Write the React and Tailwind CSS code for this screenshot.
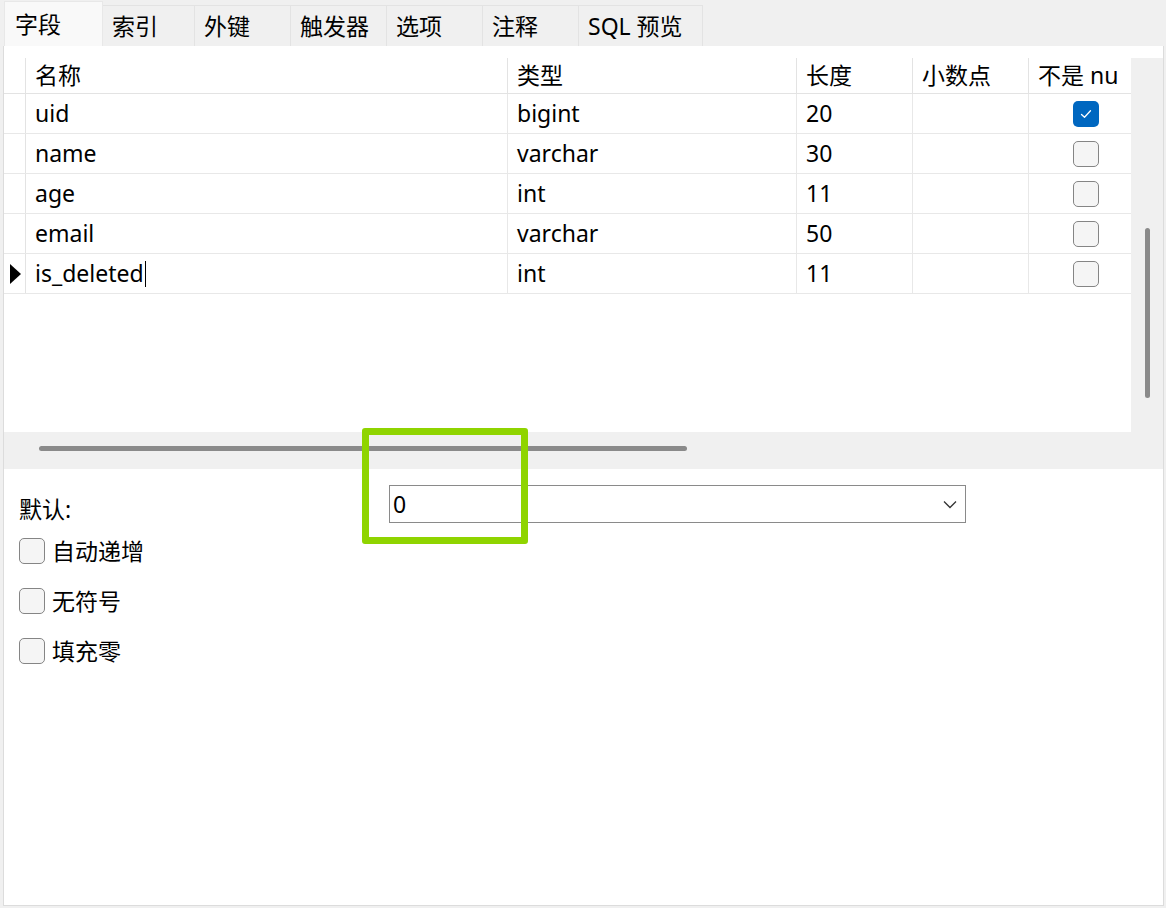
import React from "react";

const font = { fontFamily: '"Noto Sans", "Noto Sans CJK SC", sans-serif' };

function Check({ checked }) {
  if (checked) {
    return (
      <div className="w-[26px] h-[26px] rounded-[5px] bg-[#0067c0] flex items-center justify-center">
        <svg width="14" height="14" viewBox="0 0 14 14" fill="none">
          <path d="M2.5 7.5 L5.5 10.2 L11.5 3.8" stroke="white" strokeWidth="1.3" strokeLinecap="round" strokeLinejoin="round" />
        </svg>
      </div>
    );
  }
  return <div className="w-[26px] h-[26px] rounded-[5px] bg-[#f5f5f5] border border-[#858585]" />;
}

const rows = [
  { name: "uid", type: "bigint", len: "20", nn: true },
  { name: "name", type: "varchar", len: "30" },
  { name: "age", type: "int", len: "11" },
  { name: "email", type: "varchar", len: "50" },
  { name: "is_deleted", type: "int", len: "11", current: true },
];

const tabs = ["索引", "外键", "触发器", "选项", "注释", "SQL 预览"];
const tabW = ["w-[92px]", "w-[96px]", "w-[96px]", "w-[96px]", "w-[96px]", "w-[124px]"];

export default function App() {
  return (
    <div className="relative w-[1166px] h-[908px] bg-[#f0f0f0] text-[23px] text-black overflow-hidden" style={font}>
      {/* Tabs */}
      <div className="flex items-end h-[46px] pl-[4px]">
        <div className="w-[99px] h-[45px] bg-[#f9f9f9] border-t border-l border-r border-[#e8e8e8] flex items-center pl-[10px] leading-none">
          字段
        </div>
        {tabs.map((t, i) => (
          <div
            key={t}
            className={`${tabW[i]} h-[41px] border-t border-r border-[#e3e3e3] bg-[#f0f0f0] flex items-center pl-[9px] leading-none whitespace-nowrap`}
          >
            {t}
          </div>
        ))}
      </div>

      {/* Panel */}
      <div className="ml-[3px] w-[1161px] h-[860px] bg-white border-l border-r border-b border-[#dcdcdc] flex flex-col">
        <div className="h-[12px]" />
        <div className="flex h-[374px]">
          {/* Grid */}
          <div className="w-[1127px] bg-white">
            <div className="flex h-[36px] border-b border-[#e3e3e3]">
              <div className="w-[22px] border-r border-[#e3e3e3]" />
              <div className="w-[482px] border-r border-[#e3e3e3] pl-[9px] flex items-center">名称</div>
              <div className="w-[289px] border-r border-[#e3e3e3] pl-[9px] flex items-center">类型</div>
              <div className="w-[116px] border-r border-[#e3e3e3] pl-[9px] flex items-center">长度</div>
              <div className="w-[116px] border-r border-[#e3e3e3] pl-[9px] flex items-center">小数点</div>
              <div className="w-[102px] pl-[9px] flex items-center whitespace-nowrap overflow-hidden">不是 nu</div>
            </div>
            {rows.map((r) => (
              <div key={r.name} className="flex h-[40px] border-b border-[#e8e8e8]">
                <div className="w-[22px] border-r border-[#e3e3e3] flex items-center pl-[6px]">
                  {r.current && (
                    <svg width="12" height="20" viewBox="0 0 12 20">
                      <path d="M0 0 L11 10 L0 20 Z" fill="black" />
                    </svg>
                  )}
                </div>
                <div className="w-[482px] border-r border-[#e8e8e8] pl-[9px] flex items-center">
                  {r.name}
                  {r.current && <span className="inline-block w-[1px] h-[26px] bg-black ml-[1px]" />}
                </div>
                <div className="w-[289px] border-r border-[#e8e8e8] pl-[9px] flex items-center">{r.type}</div>
                <div className="w-[116px] border-r border-[#e8e8e8] pl-[9px] flex items-center">{r.len}</div>
                <div className="w-[116px] border-r border-[#e8e8e8]" />
                <div className="w-[102px] flex items-center pl-[44px]">
                  <Check checked={r.nn} />
                </div>
              </div>
            ))}
          </div>
          {/* Vertical scrollbar */}
          <div className="flex-1 bg-[#f0f0f0] pt-[170px] pl-[14px]">
            <div className="w-[5px] h-[170px] rounded-full bg-[#8a8a8a]" />
          </div>
        </div>
        {/* Horizontal scrollbar */}
        <div className="h-[37px] bg-[#f0f0f0] pt-[14px] pl-[35px]">
          <div className="w-[648px] h-[5px] rounded-full bg-[#8a8a8a]" />
        </div>

        {/* Bottom */}
        <div className="flex-1 bg-white pl-[15px] pt-[16px]">
          <div className="flex items-center h-[38px]">
            <div className="w-[370px] pt-[11px]">默认:</div>
            <div className="w-[577px] h-[38px] border border-[#8a8a8a] flex items-center justify-between pl-[3px] pr-[8px]">
              <span>0</span>
              <svg width="14" height="9" viewBox="0 0 14 9" fill="none">
                <path d="M1 1.5 L7 7.5 L13 1.5" stroke="#333" strokeWidth="1.3" />
              </svg>
            </div>
          </div>
          <div className="flex flex-col mt-[15px] gap-[24px]">
            {["自动递增", "无符号", "填充零"].map((l) => (
              <div key={l} className="flex items-center h-[26px] gap-[7px]">
                <Check />
                <span>{l}</span>
              </div>
            ))}
          </div>
        </div>
      </div>

      {/* Highlight */}
      <div className="absolute left-[362px] top-[428px] w-[166px] h-[116px] border-[7px] border-[#8fd400] rounded-[3px]" />
    </div>
  );
}
